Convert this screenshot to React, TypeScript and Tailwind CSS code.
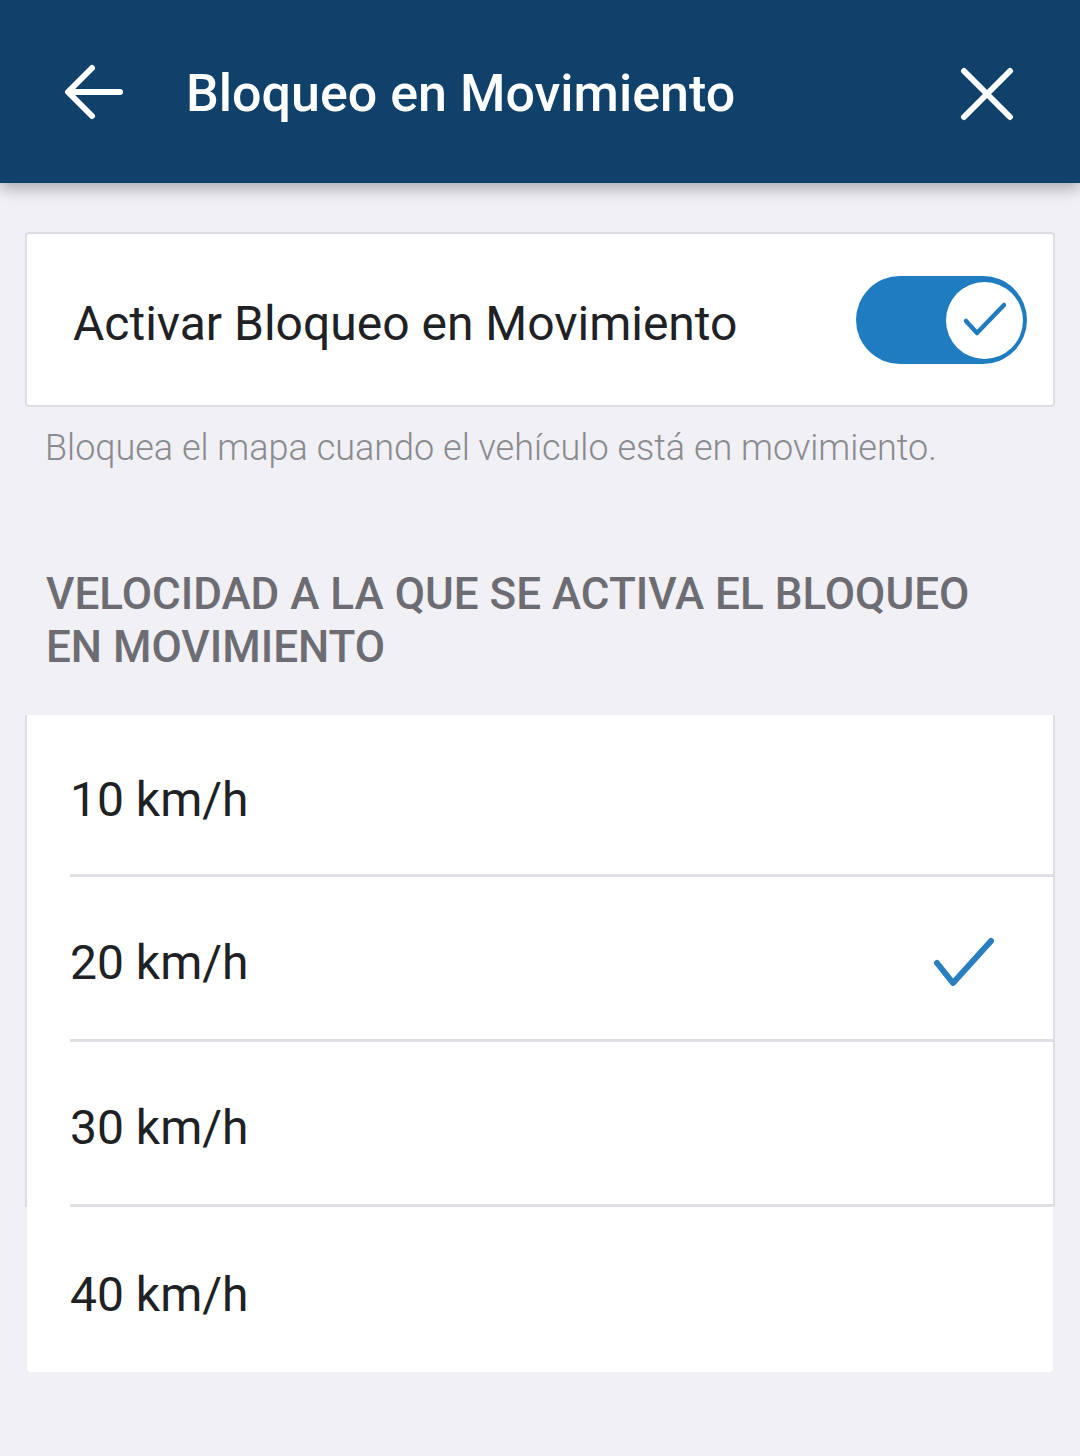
import React, { useState } from 'react';

const speeds = ['10 km/h', '20 km/h', '30 km/h', '40 km/h'];

const App: React.FC = () => {
  const [enabled, setEnabled] = useState<boolean>(true);
  const [selected, setSelected] = useState<string>('20 km/h');

  return (
    <div className="min-h-[1456px] w-[1080px] bg-[#f0f0f5] font-['Roboto',sans-serif]">
      {/* top bar */}
      <header className="relative z-10 flex h-[183px] items-center bg-[#10416b] pt-[4px] shadow-[0_6px_14px_rgba(0,0,0,0.28)]">
        <button className="ml-[62px] flex h-[64px] w-[64px] items-center justify-center text-white">
          <svg width="64" height="64" viewBox="0 0 64 64" fill="none" stroke="currentColor" strokeWidth="6" strokeLinecap="round" strokeLinejoin="round">
            <path d="M58 30H7" />
            <path d="M30 6L6 30l24 24" />
          </svg>
        </button>
        <h1 className="ml-[60px] flex-1 text-[52px] font-medium leading-none text-white">
          Bloqueo en Movimiento
        </h1>
        <button className="mr-[66px] flex h-[54px] w-[54px] items-center justify-center text-white">
          <svg width="54" height="54" viewBox="0 0 54 54" fill="none" stroke="currentColor" strokeWidth="6" strokeLinecap="round">
            <path d="M4 4l46 46M50 4L4 50" />
          </svg>
        </button>
      </header>

      <main className="px-[25px] pt-[49px]">
        {/* toggle card */}
        <div className="flex h-[175px] items-center justify-between rounded-[4px] border-2 border-[#dcdce3] bg-white pl-[46px] pr-[26px]">
          <span className="pt-[8px] text-[48px] leading-none text-[#202124]">Activar Bloqueo en Movimiento</span>
          <button
            onClick={() => setEnabled(!enabled)}
            className={`relative h-[88px] w-[171px] rounded-full ${enabled ? 'bg-[#207cc0]' : 'bg-[#c7c7cc]'}`}
          >
            <span
              className={`absolute top-[6px] flex h-[77px] w-[77px] items-center justify-center rounded-full bg-white ${enabled ? 'right-[4px]' : 'left-[4px]'}`}
            >
              {enabled && (
                <svg width="46" height="40" viewBox="0 0 46 40" fill="none" stroke="#207cc0" strokeWidth="4.5" strokeLinecap="round" strokeLinejoin="round">
                  <path d="M4 21l11 12L42 5" />
                </svg>
              )}
            </span>
          </button>
        </div>

        <p className="ml-[20px] mt-[23px] text-[36px] font-light leading-none text-[#8a8a8f]">
          Bloquea el mapa cuando el vehículo está en movimiento.
        </p>

        <h2 className="ml-[21px] mt-[102px] text-[44px] font-medium leading-[53px] text-[#6c6c72]">
          VELOCIDAD A LA QUE SE ACTIVA EL BLOQUEO
          <br />
          EN MOVIMIENTO
        </h2>

        {/* speed list */}
        <ul className="mt-[41px]">
          {speeds.map((s, i) => {
            const last = i === speeds.length - 1;
            return (
              <li
                key={s}
                onClick={() => setSelected(s)}
                className={
                  last
                    ? 'mx-[2px] h-[165px] rounded-b-[4px] bg-white'
                    : `${i === 0 ? 'h-[162px]' : 'h-[165px]'} border-x-2 border-[#dcdce3] bg-white`
                }
              >
                <div className="flex h-full items-center pl-[43px]">
                  <div className={`flex h-full flex-1 items-center pr-[58px] ${last ? '' : 'border-b-[3px] border-[#dfdfe6]'}`}>
                    <span className="flex-1 pt-[10px] text-[48px] leading-none text-[#202124]">{s}</span>
                    {selected === s && (
                      <svg width="62" height="50" viewBox="0 0 62 50" fill="none" stroke="#2a7fc1" strokeWidth="6" strokeLinecap="round" strokeLinejoin="round" className="mt-[8px]">
                        <path d="M4 26l16 20L58 4" />
                      </svg>
                    )}
                  </div>
                </div>
              </li>
            );
          })}
        </ul>
      </main>
    </div>
  );
};

export default App;
